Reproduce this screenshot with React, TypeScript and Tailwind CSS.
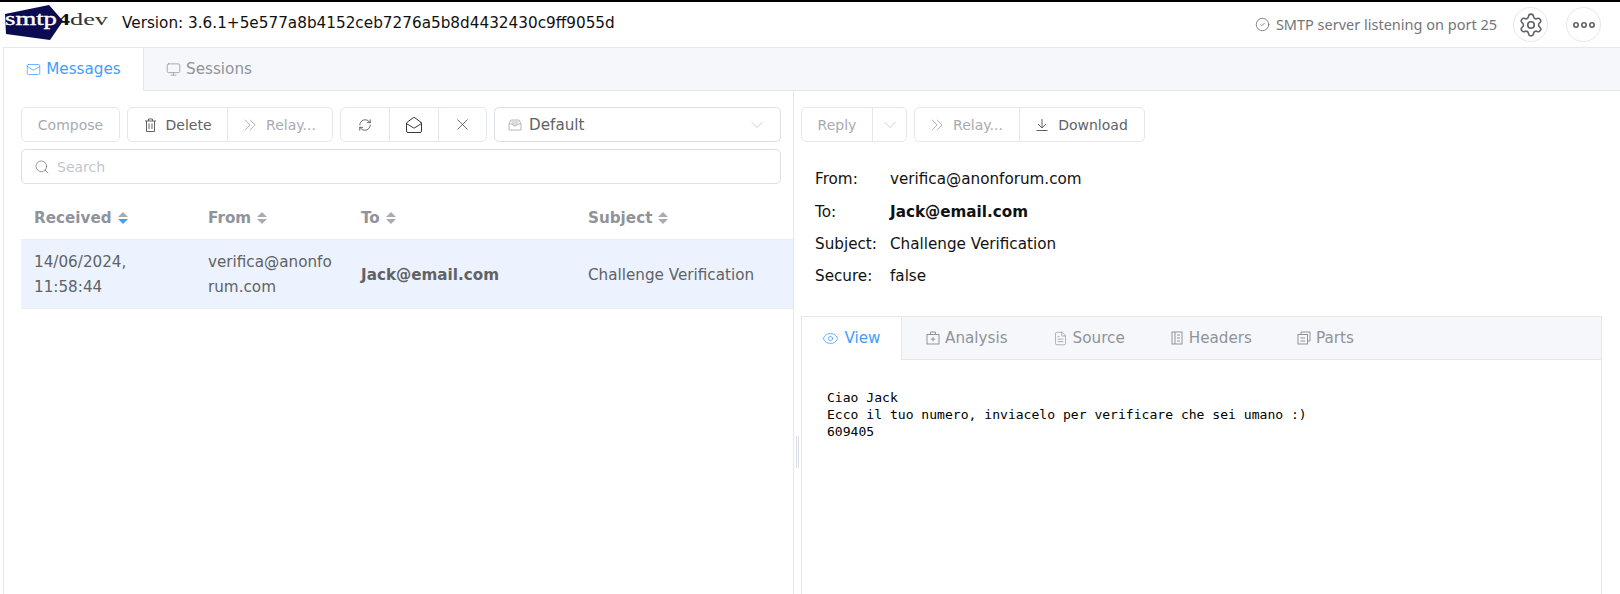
import type { ReactNode } from "react";
import {
  ChevronDown,
  Eye,
  FileText,
  Mail,
  MailOpen,
  Monitor,
  RefreshCw,
  Search,
  Settings,
  X,
  CircleCheck,
} from "lucide-react";

const sans = "font-['DejaVu_Sans',sans-serif]";

function Logo() {
  return (
    <svg width="112" height="40" viewBox="0 0 112 40" className="shrink-0">
      <polygon points="4,9 48,0 62,16 49,35 5,29" fill="#0b0b52" />
      <text x="4" y="19.5" fontFamily="'Liberation Serif', serif" fontSize="18" fill="#fff" stroke="#fff" strokeWidth="0.35" textLength="52" lengthAdjust="spacingAndGlyphs">
        smtp
      </text>
      <text x="57" y="19.5" fontFamily="'Liberation Serif', serif" fontSize="17" fontWeight="700" fill="#111" textLength="12" lengthAdjust="spacingAndGlyphs">
        4
      </text>
      <text x="69" y="19.5" fontFamily="'Liberation Serif', serif" fontSize="16" fill="#333" textLength="38" lengthAdjust="spacingAndGlyphs">
        dev
      </text>
    </svg>
  );
}

function Caret({ active }: { active?: boolean }) {
  return (
    <span className="ml-[6px] flex flex-col gap-[2px]">
      <span className="h-0 w-0 border-x-[5px] border-b-[5px] border-x-transparent border-b-[#a8abb2]" />
      <span className={`h-0 w-0 border-x-[5px] border-t-[5px] border-x-transparent ${active ? "border-t-[#409eff]" : "border-t-[#a8abb2]"}`} />
    </span>
  );
}

function Btn({ children, disabled, className = "" }: { children: ReactNode; disabled?: boolean; className?: string }) {
  return (
    <button className={`flex h-[33px] items-center justify-center text-sm ${disabled ? "text-[#a8abb2]" : "text-[#606266]"} ${className}`}>
      {children}
    </button>
  );
}

function TabItem({ icon, label, active, className = "" }: { icon: ReactNode; label: string; active?: boolean; className?: string }) {
  return (
    <div className={`flex items-center gap-[5px] text-[15.2px] ${active ? "pb-[1px] text-[#409eff]" : "text-[#909399]"} ${className}`}>
      {icon}
      {label}
    </div>
  );
}

function InfoRow({ label, value, bold, className = "h-[32px]" }: { label: string; value: string; bold?: boolean; className?: string }) {
  return (
    <div className={`flex items-center text-[15.2px] text-[#111] ${className}`}>
      <span className="w-[75px]">{label}</span>
      <span className={bold ? "font-bold" : ""}>{value}</span>
    </div>
  );
}

const Kit = (
  <svg width="14" height="14" viewBox="0 0 14 14" fill="none" stroke="currentColor" strokeWidth="1">
    <rect x="1" y="3.5" width="12" height="9.5" />
    <path d="M4.5 3.5V1h5v2.5M7 6v4.5M4.8 8.2h4.4" />
  </svg>
);
const Tickets = (
  <svg width="14" height="14" viewBox="0 0 14 14" fill="none" stroke="currentColor" strokeWidth="1">
    <rect x="2" y="1" width="10" height="12" />
    <path d="M5 1v12M7 4h3M7 7h3M7 10h3" />
  </svg>
);
const Copy = (
  <svg width="14" height="14" viewBox="0 0 14 14" fill="none" stroke="currentColor" strokeWidth="1">
    <path d="M4 3V1h9v9h-2.5" />
    <rect x="1" y="3.5" width="9.5" height="9.5" />
    <path d="M3.5 7h4.5M3.5 10h4.5" />
  </svg>
);
const Tray = (
  <svg width="14" height="14" viewBox="0 0 14 14" fill="none" stroke="currentColor" strokeWidth="1">
    <path d="M3 2h8l2 4v6H1V6zM1 6h12M4.5 6a2.5 2 0 0 0 5 0M3.5 4h7" />
  </svg>
);
const Bin = (
  <svg width="13" height="14" viewBox="0 0 13 14" fill="none" stroke="currentColor" strokeWidth="1">
    <path d="M1 3h11M4.5 3V1h4v2M2.5 3v10.5h8V3M5 5.5v5.5M8 5.5v5.5" />
  </svg>
);
const Relay = (
  <svg width="12" height="12" viewBox="0 0 12 12" fill="none" stroke="currentColor" strokeWidth="0.9">
    <path d="M1 .8 6 6l-5 5.2M6 .8 11 6l-5 5.2" />
  </svg>
);
const Save = (
  <svg width="12" height="13" viewBox="0 0 12 13" fill="none" stroke="currentColor" strokeWidth="1">
    <path d="M6 1v8.5M2 6l4 4 4-4M.5 12.5h11" />
  </svg>
);

export default function App() {
  return (
    <div className={`flex h-screen flex-col overflow-hidden border-t-2 border-black bg-white ${sans}`}>
      {/* Top bar */}
      <header className="flex h-[45px] items-center pl-[1px] pr-[19px]">
        <Logo />
        <span className="ml-[9px] -mt-[3px] text-[15.25px] text-[#111]">Version: 3.6.1+5e577a8b4152ceb7276a5b8d4432430c9ff9055d</span>
        <div className="ml-auto flex items-center">
          <CircleCheck size={15} strokeWidth={1.2} className="text-[#606266]" />
          <span className="ml-[6px] font-['Noto_Sans',sans-serif] text-[14.5px] text-[#73767a]">SMTP server listening on port 25</span>
          <button className="ml-[16px] flex h-[35px] w-[35px] items-center justify-center rounded-full border border-[#e4e7ed] text-[#606266]">
            <Settings size={26} strokeWidth={1.5} />
          </button>
          <button className="ml-[18px] flex h-[35px] w-[35px] items-center justify-center rounded-full border border-[#e4e7ed] text-[#606266]">
            <svg width="24" height="10" viewBox="0 0 24 10" fill="none" stroke="currentColor" strokeWidth="1.6">
              <circle cx="4" cy="5" r="2.2" />
              <circle cx="12" cy="5" r="2.2" />
              <circle cx="20" cy="5" r="2.2" />
            </svg>
          </button>
        </div>
      </header>

      {/* Main tabs */}
      <div className="ml-[3px] flex min-h-0 flex-1 flex-col border-l border-t border-[#e4e7ed]">
        <div className="flex h-[43px] shrink-0 border-b border-[#e4e7ed] bg-[#f5f7fa]">
          <TabItem active label="Messages" icon={<Mail size={15} strokeWidth={1.2} />} className="-mb-[1px] w-[140px] justify-center border-r border-[#e4e7ed] bg-white" />
          <TabItem label="Sessions" icon={<Monitor size={15} strokeWidth={1.2} />} className="w-[130px] justify-center" />
        </div>

        <div className="flex min-h-0 flex-1">
          {/* Message list */}
          <div className="w-[790px] shrink-0 border-r border-[#e4e7ed] pl-[17px] pt-[16px]">
            <div className="pr-[12px]">
              <div className="flex gap-[7px]">
                <div className="flex w-[99px] rounded-[5px] border border-[#e4e7ed]">
                  <Btn disabled className="w-full">Compose</Btn>
                </div>
                <div className="flex w-[206px] rounded-[5px] border border-[#e4e7ed]">
                  <Btn className="w-[100px] gap-[9px] border-r border-[#e4e7ed]">{Bin}Delete</Btn>
                  <Btn disabled className="flex-1 gap-[10px]">{Relay}Relay...</Btn>
                </div>
                <div className="flex w-[147px] rounded-[5px] border border-[#e4e7ed]">
                  <Btn className="w-[49px] border-r border-[#e4e7ed]"><RefreshCw size={14} strokeWidth={1.2} className="text-[#303133]" /></Btn>
                  <Btn className="w-[49px] border-r border-[#e4e7ed]"><MailOpen size={18} strokeWidth={1.3} className="text-[#303133]" /></Btn>
                  <Btn className="flex-1"><X size={19} strokeWidth={0.9} className="text-[#303133]" /></Btn>
                </div>
                <div className="flex h-[35px] flex-1 items-center rounded-[5px] border border-[#dcdfe6] pl-[13px] pr-[13px] text-[#606266]">
                  <span className="text-[#b4b6bb]">{Tray}</span>
                  <span className="ml-[7px] pt-[2px] text-[15.2px]">Default</span>
                  <ChevronDown size={20} strokeWidth={0.7} className="ml-auto text-[#a8abb2]" />
                </div>
              </div>
              <div className="mt-[7px] flex h-[35px] items-center rounded-[5px] border border-[#dcdfe6] pl-[12px] text-sm text-[#c4c6cc]">
                <Search size={16} strokeWidth={1.1} className="text-[#73767a]" />
                <span className="ml-[7px]">Search</span>
              </div>
            </div>

            {/* Table */}
            <div className="mt-[11px] grid h-[45px] grid-cols-[174px_153px_227px_1fr] items-center border-b border-[#ebeef5] pt-[2px] text-[15.2px] font-bold text-[#909399]">
              {["Received", "From", "To", "Subject"].map((h, i) => (
                <div key={h} className="flex items-center pl-[13px]">
                  {h}
                  <Caret active={i === 0} />
                </div>
              ))}
            </div>
            <div className="grid h-[69px] grid-cols-[174px_153px_227px_1fr] items-center border-b border-[#ebeef5] bg-[#ecf3fe] pt-[2px] text-[15.2px] leading-[25px] text-[#606266]">
              <div className="pl-[13px]">14/06/2024,<br />11:58:44</div>
              <div className="px-[13px] break-all">verifica@anonforum.com</div>
              <div className="pl-[13px] font-bold">Jack@email.com</div>
              <div className="pl-[13px]">Challenge Verification</div>
            </div>
          </div>

          {/* Splitter */}
          <div className="flex w-[7px] shrink-0 items-center">
            <div className="ml-[2px] mt-[218px] h-[32px] w-[3px] border-x border-[#dcdfe6]" />
          </div>

          {/* Message view */}
          <div className="flex min-w-0 flex-1 flex-col pr-[18px] pt-[16px]">
            <div className="flex gap-[7px]">
              <div className="flex w-[106px] rounded-[5px] border border-[#e4e7ed]">
                <Btn disabled className="w-[71px] border-r border-[#e4e7ed]">Reply</Btn>
                <Btn disabled className="flex-1"><ChevronDown size={20} strokeWidth={0.7} /></Btn>
              </div>
              <div className="flex w-[231px] rounded-[5px] border border-[#e4e7ed]">
                <Btn disabled className="w-[105px] gap-[10px] border-r border-[#e4e7ed]">{Relay}Relay...</Btn>
                <Btn className="flex-1 gap-[10px]">{Save}Download</Btn>
              </div>
            </div>
            <div className="ml-[14px] mt-[21px]">
              <InfoRow label="From:" value="verifica@anonforum.com" className="h-[33px]" />
              <InfoRow label="To:" value="Jack@email.com" bold />
              <InfoRow label="Subject:" value="Challenge Verification" />
              <InfoRow label="Secure:" value="false" />
            </div>

            <div className="mt-[24px] flex min-h-0 flex-1 flex-col border-x border-t border-[#e4e7ed]">
              <div className="flex h-[43px] shrink-0 border-b border-[#e4e7ed] bg-[#f5f7fa]">
                <TabItem active label="View" icon={<Eye size={17} strokeWidth={1.1} />} className="-mb-[1px] w-[100px] justify-center border-r border-[#e4e7ed] bg-white" />
                <TabItem label="Analysis" icon={Kit} className="ml-[24px]" />
                <TabItem label="Source" icon={<FileText size={15} strokeWidth={1.1} />} className="ml-[45px]" />
                <TabItem label="Headers" icon={Tickets} className="ml-[45px]" />
                <TabItem label="Parts" icon={Copy} className="ml-[45px]" />
              </div>
              <pre className="pl-[25px] pt-[29px] font-['DejaVu_Sans_Mono',monospace] text-[13.07px] leading-[17px] text-black">
                {"Ciao Jack\nEcco il tuo numero, inviacelo per verificare che sei umano :)\n609405"}
              </pre>
            </div>
          </div>
        </div>
      </div>
    </div>
  );
}
